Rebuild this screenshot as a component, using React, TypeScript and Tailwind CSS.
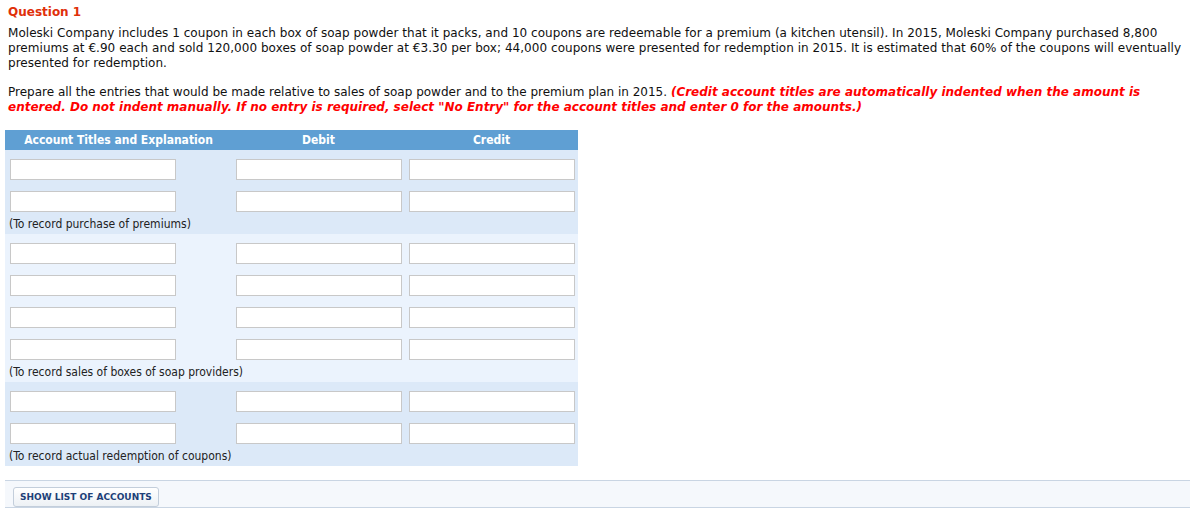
import React from "react";

const verdana = { fontFamily: '"DejaVu Sans", Verdana, sans-serif' };
const tahoma = { fontFamily: '"DejaVu Sans Condensed", "DejaVu Sans", sans-serif' };

function Field() {
  return <input type="text" className="block h-[21px] w-[166px] border border-[#c8c8c8] bg-white outline-none" />;
}

function EntryRow() {
  return (
    <div className="flex h-[32px] items-start pt-[9px]">
      <div className="w-[227px] pl-[5px]">
        <Field />
      </div>
      <div className="w-[173px] pl-[4px]">
        <Field />
      </div>
      <div className="w-[173px] pl-[4px]">
        <Field />
      </div>
    </div>
  );
}

function Section({ rows, note, light }: { rows: number; note: string; light?: boolean }) {
  return (
    <div className={light ? "bg-[#ebf3fd]" : "bg-[#dce9f8]"}>
      {Array.from({ length: rows }).map((_, i) => (
        <EntryRow key={i} />
      ))}
      <div className="h-[20px] pl-[4px] pt-[2px] text-[12px] leading-[16px] text-[#222]">{note}</div>
    </div>
  );
}

export default function App() {
  return (
    <div className="h-[510px] w-[1190px] overflow-hidden bg-white text-[#111]" style={verdana}>
      <div className="pl-[8px] pr-[4px] pt-[5px] text-[12px] leading-[15px]">
        <div className="font-bold text-[#e0300a]">Question 1</div>
        <p className="mt-[6px] tracking-[0.04px]">
          Moleski Company includes 1 coupon in each box of soap powder that it packs, and 10 coupons are redeemable for
          a premium (a kitchen utensil). In 2015, Moleski Company purchased 8,800 premiums at €.90 each and sold
          120,000 boxes of soap powder at €3.30 per box; 44,000 coupons were presented for redemption in 2015. It is
          estimated that 60% of the coupons will eventually presented for redemption.
        </p>
        <p className="mt-[14px]">
          Prepare all the entries that would be made relative to sales of soap powder and to the premium plan in 2015.{" "}
          <span className="font-bold italic text-[#ff0000]">
            (Credit account titles are automatically indented when the amount is entered. Do not indent manually. If
            no entry is required, select "No Entry" for the account titles and enter 0 for the amounts.)
          </span>
        </p>
      </div>

      <div className="ml-[5px] mt-[15px] w-[573px]" style={tahoma}>
        <div className="flex h-[20px] items-center bg-[#5f9fd3] text-[12px] font-bold text-white">
          <div className="w-[227px] text-center">Account Titles and Explanation</div>
          <div className="w-[173px] text-center">Debit</div>
          <div className="w-[173px] text-center">Credit</div>
        </div>
        <Section rows={2} note="(To record purchase of premiums)" />
        <Section rows={4} note="(To record sales of boxes of soap providers)" light />
        <Section rows={2} note="(To record actual redemption of coupons)" />
      </div>

      <div className="ml-[5px] mt-[14px] flex h-[28px] items-start border-y border-[#c9d5e3] bg-[#f5f8fc] pl-[8px] pt-[6px]">
        <button className="h-[20px] rounded-[3px] border border-[#c3cedb] bg-gradient-to-b from-white to-[#edf1f5] px-[6px] text-[9px] font-bold leading-[18px] text-[#1d3f78]">
          SHOW LIST OF ACCOUNTS
        </button>
      </div>
    </div>
  );
}
